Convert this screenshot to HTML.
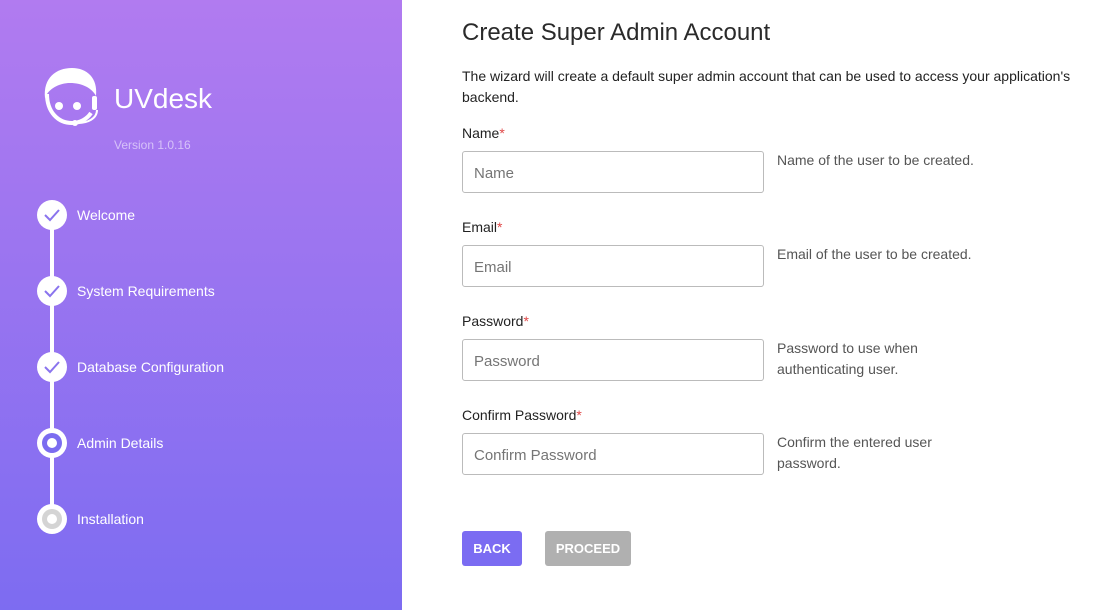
<!DOCTYPE html>
<html><head><meta charset="utf-8"><style>
*{box-sizing:border-box;margin:0;padding:0}
body{width:1117px;height:610px;overflow:hidden;font-family:"Liberation Sans",sans-serif;background:#fff;position:relative}
.side{position:absolute;left:0;top:0;width:402px;height:610px;background:linear-gradient(180deg,#b17bf0 0%,#7d6cf1 100%)}
.brand{position:absolute;left:114px;top:83px;font-size:28px;color:#fff}
.ver{position:absolute;left:114px;top:138px;font-size:12px;color:rgba(255,255,255,.55)}
.line{position:absolute;left:50px;top:215px;width:4px;height:304px;background:#fff}
.c{position:absolute;left:37px;width:30px;height:30px;border-radius:50%;background:#fff}
.st{position:absolute;left:77px;font-size:14px;color:#fff}
.main{position:absolute;left:462px;top:0;width:630px;color:#333}
h1{position:absolute;top:19px;font-weight:normal;font-size:24px;color:#2a2a2a;white-space:nowrap}
.desc{position:absolute;top:66px;font-size:14px;line-height:21px;width:630px;color:#222}
.lab{position:absolute;font-size:14px;color:#222}
.lab b{color:#e04848;font-weight:normal}
.inp{position:absolute;width:302px;height:42px;border:1px solid #bbb;border-radius:3px;padding-left:11px;font-size:15px;color:#757575;line-height:43px}
.hint{position:absolute;left:315px;font-size:14px;color:#555;line-height:21px;width:210px}
.btn{position:absolute;top:531px;height:35px;border-radius:3px;color:#fff;font-weight:bold;font-size:13px;line-height:35px;text-align:center}
</style></head><body>
<div class="side">
<svg style="position:absolute;left:42px;top:66px" width="62" height="62" viewBox="0 0 62 62">
<path d="M3 32 C1 12 14 2 30 2 C45 2 56 12 54 30 C50 22 40 17 28 17 C18 17 9 22 5 28 Z" fill="#fff"/>
<path d="M5 28 C5 46 16 57 30 57 C38 57 45 53 49 47" fill="none" stroke="#fff" stroke-width="4"/>
<circle cx="17" cy="40" r="4" fill="#fff"/><circle cx="35" cy="40" r="4" fill="#fff"/>
<rect x="50" y="30" width="5" height="14" rx="2" fill="#fff"/>
<path d="M55 44 C55 53 45 57 36 57" fill="none" stroke="#fff" stroke-width="2"/>
<circle cx="33" cy="57" r="3" fill="#fff"/>
</svg>
<div class="brand">UVdesk</div>
<div class="ver">Version 1.0.16</div>
<div class="line"></div>
<div class="c" style="top:200px"><svg width="30" height="30"><path d="M8 15 L13 20 L22 10" stroke="#8a74ee" stroke-width="2" fill="none"/></svg></div>
<div class="c" style="top:276px"><svg width="30" height="30"><path d="M8 15 L13 20 L22 10" stroke="#8a74ee" stroke-width="2" fill="none"/></svg></div>
<div class="c" style="top:352px"><svg width="30" height="30"><path d="M8 15 L13 20 L22 10" stroke="#8a74ee" stroke-width="2" fill="none"/></svg></div>
<div class="c" style="top:428px"><svg width="30" height="30"><circle cx="15" cy="15" r="10" fill="#7b6cf0"/><circle cx="15" cy="15" r="5" fill="#fff"/></svg></div>
<div class="c" style="top:504px"><svg width="30" height="30"><circle cx="15" cy="15" r="10" fill="#d4d4d4"/><circle cx="15" cy="15" r="5" fill="#fff"/></svg></div>
<div class="st" style="top:207px">Welcome</div>
<div class="st" style="top:283px">System Requirements</div>
<div class="st" style="top:359px">Database Configuration</div>
<div class="st" style="top:435px">Admin Details</div>
<div class="st" style="top:511px">Installation</div>
</div>
<div class="main">
<h1>Create Super Admin Account</h1>
<div class="desc">The wizard will create a default super admin account that can be used to access your application's backend.</div>
<div class="lab" style="top:125px">Name<b>*</b></div>
<div class="inp" style="top:151px">Name</div>
<div class="hint" style="top:150px">Name of the user to be created.</div>
<div class="lab" style="top:219px">Email<b>*</b></div>
<div class="inp" style="top:245px">Email</div>
<div class="hint" style="top:244px">Email of the user to be created.</div>
<div class="lab" style="top:313px">Password<b>*</b></div>
<div class="inp" style="top:339px">Password</div>
<div class="hint" style="top:338px">Password to use when authenticating user.</div>
<div class="lab" style="top:407px">Confirm Password<b>*</b></div>
<div class="inp" style="top:433px">Confirm Password</div>
<div class="hint" style="top:432px">Confirm the entered user password.</div>
<div class="btn" style="left:0;width:60px;background:#7b6cf2">BACK</div>
<div class="btn" style="left:83px;width:86px;background:#b0b0b0">PROCEED</div>
</div>
</body></html>
